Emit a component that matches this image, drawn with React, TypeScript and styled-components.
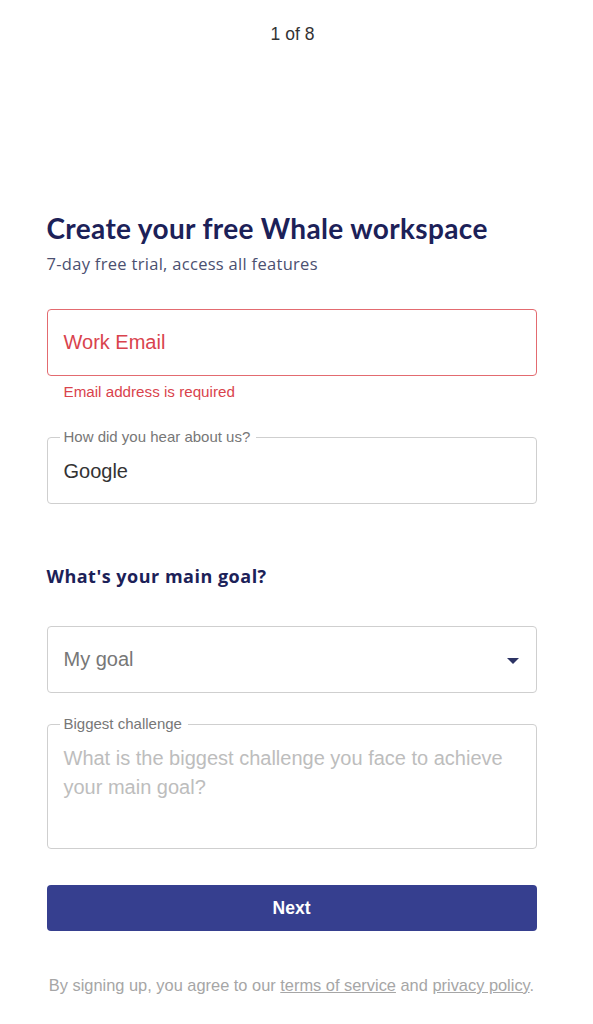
import styled, { createGlobalStyle } from 'styled-components'

const GlobalStyle = createGlobalStyle`
  body {
    margin: 0;
    background: #ffffff;
    font-family: "Liberation Sans", Arial, sans-serif;
  }
`

const Page = styled.div`
  width: 593px;
  min-height: 1024px;
  display: flex;
  flex-direction: column;
  align-items: center;
`

const Step = styled.div`
  margin-top: 25px;
  font-size: 17.5px;
  color: #333;
  line-height: 19px;
  padding-right: 8px;
`

const Form = styled.form`
  width: 490px;
  margin-top: 168px;
  margin-right: 10px;
  display: flex;
  flex-direction: column;
`

const Title = styled.h1`
  margin: 0;
  font-family: Lato, "Noto Sans", sans-serif;
  font-weight: 700;
  font-size: 28px;
  line-height: 32px;
  color: #1c2158;
  letter-spacing: 0.35px;
`

const Subtitle = styled.p`
  margin: 10px 0 0;
  font-family: "Open Sans", "Noto Sans", sans-serif;
  font-size: 16.5px;
  line-height: 20px;
  letter-spacing: 0.3px;
  color: #4b5070;
`

const Box = styled.div<{ $error?: boolean }>`
  height: 67px;
  box-sizing: border-box;
  border: 1px solid ${({ $error }) => ($error ? '#e36b70' : '#cfcfcf')};
  border-radius: 4px;
  display: flex;
  align-items: center;
  justify-content: space-between;
  padding: 0 17px 0 16px;
`

const BoxText = styled.span<{ $tone: 'error' | 'muted' }>`
  font-size: 20px;
  color: ${({ $tone }) => ($tone === 'error' ? '#d9434d' : '#777')};
`

const ErrorText = styled.div`
  margin: 7px 0 0 17px;
  font-size: 15.2px;
  color: #d9434d;
  line-height: 17px;
`

const Fieldset = styled.fieldset<{ $tall?: boolean }>`
  margin: 0;
  min-width: 0;
  box-sizing: border-box;
  height: ${({ $tall }) => ($tall ? '133px' : '75px')};
  border: 1px solid #cfcfcf;
  border-radius: 4px;
  padding: ${({ $tall }) => ($tall ? '12px 16px 0' : '15px 16px 0')};
`

const Legend = styled.legend`
  margin-left: -4px;
  padding: 0 6px 0 4px;
  font-size: 15px;
  line-height: 16px;
  color: #777;
`

const Value = styled.div`
  font-size: 20px;
  color: #333;
  line-height: 22px;
`

const Placeholder = styled.div`
  font-size: 20px;
  line-height: 29px;
  color: #bdbdbd;
`

const Question = styled.h2`
  margin: 62px 0 40px;
  font-family: "Open Sans", "Noto Sans", sans-serif;
  font-weight: 700;
  font-size: 18px;
  line-height: 20px;
  letter-spacing: 0.5px;
  color: #1c2158;
`

const Caret = styled.span`
  width: 0;
  height: 0;
  border-left: 6px solid transparent;
  border-right: 6px solid transparent;
  border-top: 6px solid #2c3364;
  margin-top: 2px;
`

const NextButton = styled.button`
  margin-top: 36px;
  height: 46px;
  border: none;
  border-radius: 4px;
  background: #363f8f;
  color: #fff;
  font-family: "Liberation Sans", Arial, sans-serif;
  font-weight: 700;
  font-size: 17.5px;
`

const Legal = styled.p`
  margin: 45px 0 0;
  text-align: center;
  font-size: 16.4px;
  color: #a6a6a6;
  line-height: 18px;
  white-space: nowrap;
`

const LegalLink = styled.a`
  color: #a6a6a6;
  text-decoration: underline;
`

export default function App() {
  return (
    <Page>
      <GlobalStyle />
      <Step>1 of 8</Step>
      <Form onSubmit={(e) => e.preventDefault()}>
        <Title>Create your free Whale workspace</Title>
        <Subtitle>7-day free trial, access all features</Subtitle>

        <Box $error style={{ marginTop: 35 }}>
          <BoxText $tone="error">Work Email</BoxText>
        </Box>
        <ErrorText>Email address is required</ErrorText>

        <Fieldset style={{ marginTop: 29 }}>
          <Legend>How did you hear about us?</Legend>
          <Value>Google</Value>
        </Fieldset>

        <Question>What's your main goal?</Question>

        <Box>
          <BoxText $tone="muted">My goal</BoxText>
          <Caret />
        </Box>

        <Fieldset $tall style={{ marginTop: 23 }}>
          <Legend>Biggest challenge</Legend>
          <Placeholder>What is the biggest challenge you face to achieve your main goal?</Placeholder>
        </Fieldset>

        <NextButton type="submit">Next</NextButton>

        <Legal>
          By signing up, you agree to our <LegalLink>terms of service</LegalLink> and{' '}
          <LegalLink>privacy policy</LegalLink>.
        </Legal>
      </Form>
    </Page>
  )
}
